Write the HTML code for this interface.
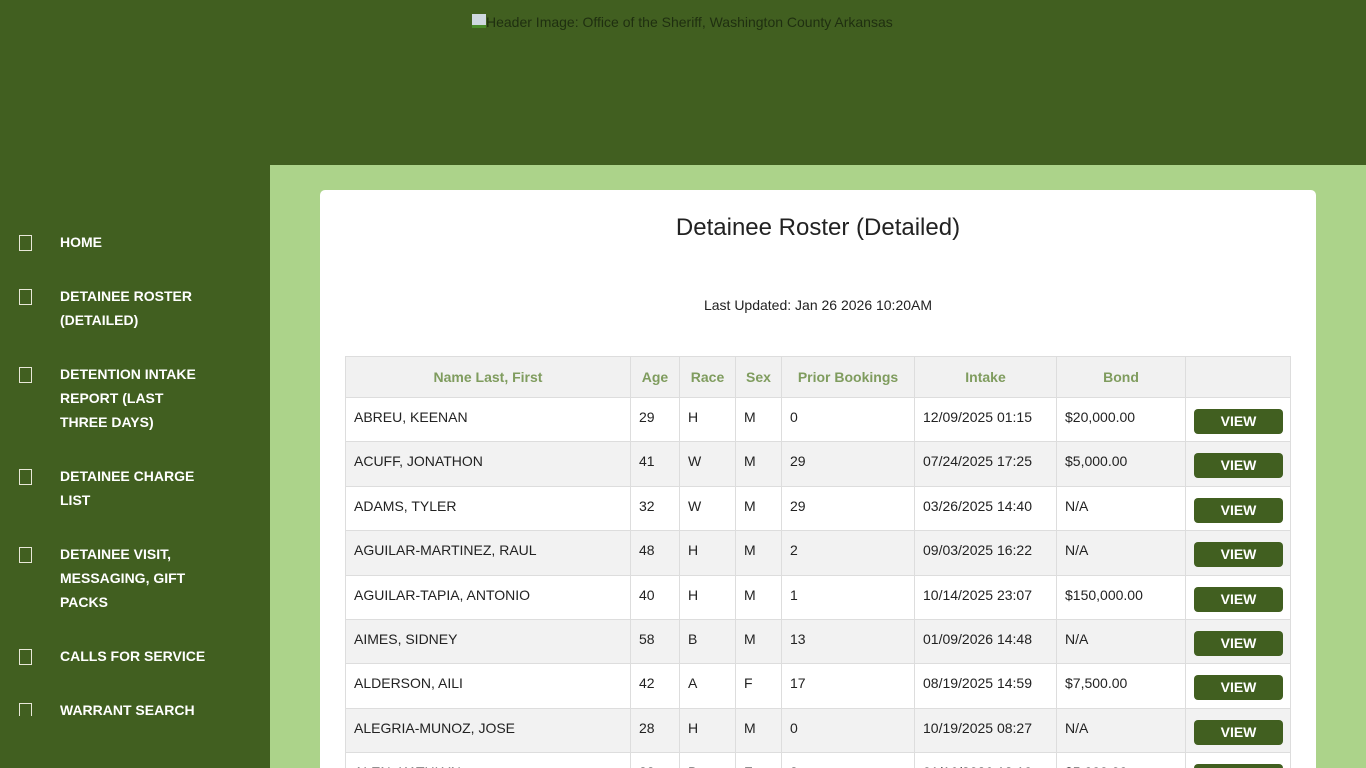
<!DOCTYPE html>
<html style="overflow:hidden"><head><meta charset="utf-8"><style>
*{box-sizing:border-box;margin:0;padding:0}
html,body{width:1366px;height:768px;overflow:hidden}
body{background:#415f20;font-family:"Liberation Sans",Arial,sans-serif;position:relative}
.hdr{position:absolute;left:472px;top:14px;font-size:14px;color:#1f2f10}
.hdr i{display:inline-block;width:14px;height:14px;background:#cfd8e0;vertical-align:-1px;border-bottom:3px solid #4a8a2a}
.side{position:absolute;left:0;top:230px;width:270px;height:486px;overflow:hidden}
.item{position:relative;padding-left:60px;color:#fff;font-weight:bold;font-size:14px;line-height:24px;width:210px;margin-bottom:30px}
.item:before{content:"";position:absolute;left:19px;top:5px;width:11px;height:14px;border:1.5px solid #e8e8d8}
.main{position:absolute;left:270px;top:165px;width:1096px;height:603px;background:#acd38a;overflow:hidden}
.card{position:absolute;left:50px;top:25px;width:996px;height:600px;background:#fff;border-radius:5px;overflow:hidden}
h1{position:absolute;top:24px;width:100%;text-align:center;font-size:24px;font-weight:normal;color:#222}
.upd{position:absolute;top:107px;width:100%;text-align:center;font-size:14px;color:#222}
table{position:absolute;left:25px;top:166px;width:945px;table-layout:fixed;border-collapse:collapse;font-size:14px;color:#222}
th{height:41px;background:#f1f1f1;color:#7f9c5e;font-weight:bold;border:1px solid #ddd;text-align:center}
td{height:44.4px;border:1px solid #ddd;padding:0 8px;vertical-align:top;padding-top:11px}
tr:nth-child(odd) td{background:#f2f2f2}
.b{display:block;width:89px;height:25px;background:#415f20;color:#fff;border-radius:4px;font-weight:bold;text-align:center;line-height:25px;margin-top:0px}
</style></head><body>
<div class="hdr"><i></i>Header Image: Office of the Sheriff, Washington County Arkansas</div>
<div class="side">
<div class="item">HOME</div>
<div class="item">DETAINEE ROSTER (DETAILED)</div>
<div class="item">DETENTION INTAKE REPORT (LAST THREE DAYS)</div>
<div class="item">DETAINEE CHARGE LIST</div>
<div class="item">DETAINEE VISIT, MESSAGING, GIFT PACKS</div>
<div class="item">CALLS FOR SERVICE</div>
<div class="item">WARRANT SEARCH</div>
</div>
<div class="main"><div class="card">
<h1>Detainee Roster (Detailed)</h1>
<div class="upd">Last Updated: Jan 26 2026 10:20AM</div>
<table>
<colgroup><col style="width:285px"><col style="width:49px"><col style="width:56px"><col style="width:46px"><col style="width:133px"><col style="width:142px"><col style="width:129px"><col style="width:105px"></colgroup>
<tr><th>Name Last, First</th><th>Age</th><th>Race</th><th>Sex</th><th>Prior Bookings</th><th>Intake</th><th>Bond</th><th></th></tr>
<tr><td>ABREU, KEENAN</td><td>29</td><td>H</td><td>M</td><td>0</td><td>12/09/2025 01:15</td><td>$20,000.00</td><td><span class="b">VIEW</span></td></tr>
<tr><td>ACUFF, JONATHON</td><td>41</td><td>W</td><td>M</td><td>29</td><td>07/24/2025 17:25</td><td>$5,000.00</td><td><span class="b">VIEW</span></td></tr>
<tr><td>ADAMS, TYLER</td><td>32</td><td>W</td><td>M</td><td>29</td><td>03/26/2025 14:40</td><td>N/A</td><td><span class="b">VIEW</span></td></tr>
<tr><td>AGUILAR-MARTINEZ, RAUL</td><td>48</td><td>H</td><td>M</td><td>2</td><td>09/03/2025 16:22</td><td>N/A</td><td><span class="b">VIEW</span></td></tr>
<tr><td>AGUILAR-TAPIA, ANTONIO</td><td>40</td><td>H</td><td>M</td><td>1</td><td>10/14/2025 23:07</td><td>$150,000.00</td><td><span class="b">VIEW</span></td></tr>
<tr><td>AIMES, SIDNEY</td><td>58</td><td>B</td><td>M</td><td>13</td><td>01/09/2026 14:48</td><td>N/A</td><td><span class="b">VIEW</span></td></tr>
<tr><td>ALDERSON, AILI</td><td>42</td><td>A</td><td>F</td><td>17</td><td>08/19/2025 14:59</td><td>$7,500.00</td><td><span class="b">VIEW</span></td></tr>
<tr><td>ALEGRIA-MUNOZ, JOSE</td><td>28</td><td>H</td><td>M</td><td>0</td><td>10/19/2025 08:27</td><td>N/A</td><td><span class="b">VIEW</span></td></tr>
<tr><td>ALEN, KATHLYN</td><td>22</td><td>B</td><td>F</td><td>3</td><td>01/16/2026 12:10</td><td>$5,000.00</td><td><span class="b">VIEW</span></td></tr>
</table>
</div></div>
</body></html>
